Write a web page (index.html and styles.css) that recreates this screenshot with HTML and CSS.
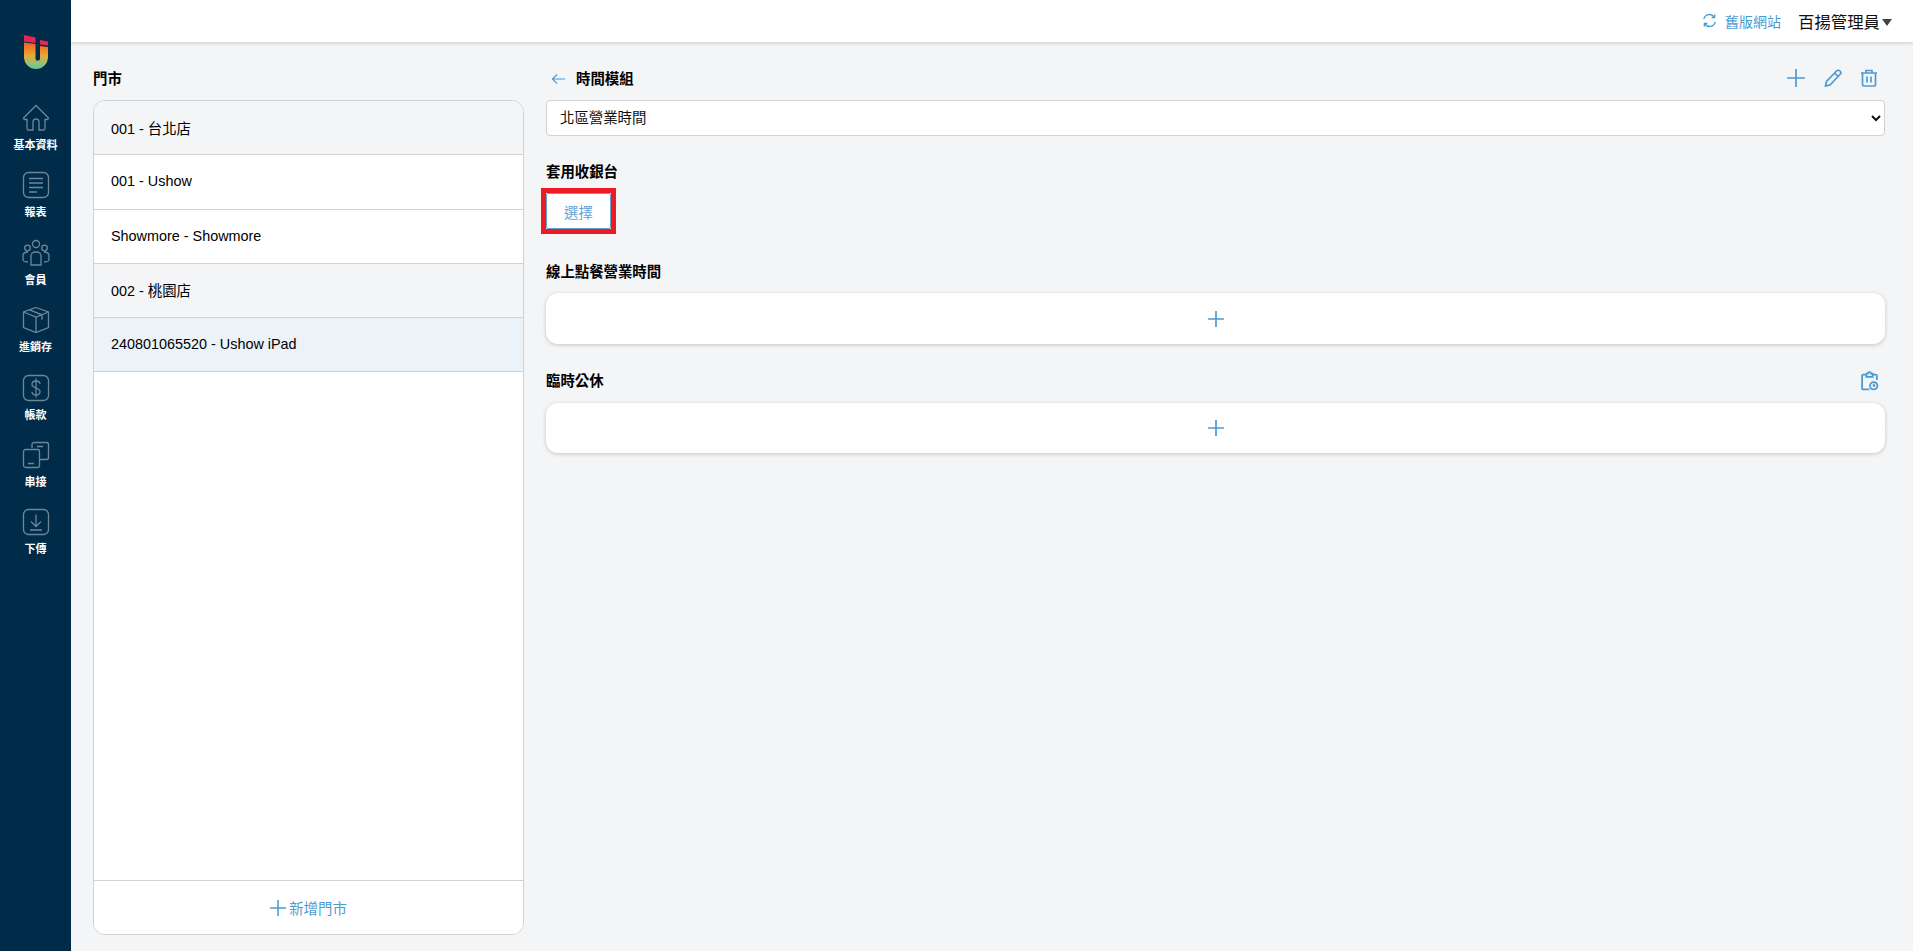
FILE: index.html
```html
<!DOCTYPE html>
<html lang="zh-Hant">
<head>
<meta charset="utf-8">
<title>時間模組</title>
<link rel="stylesheet" href="styles.css">
</head>
<body>
<div class="app">
  <nav class="sidebar">
    <svg class="logo" viewBox="0 0 24 34" width="24" height="34">
      <defs><linearGradient id="lg" x1="0" y1="0" x2="0" y2="1"><stop offset="0" stop-color="#f0602b"/><stop offset=".5" stop-color="#e9a92f"/><stop offset=".8" stop-color="#93c27a"/><stop offset="1" stop-color="#5cc3a7"/></linearGradient></defs>
      <path d="M0 0l11.500 2.500V8L0 6.500z" fill="#e8264f"/>
      <path d="M16 5l8 1.500v4L16 9.500z" fill="#e8264f"/>
      <path d="M0 7.500l11.500 1.500V23.500a2.250 2.250 0 0 0 4.500 0V11l8 1v10a12 12 0 0 1-24 0z" fill="url(#lg)"/>
    </svg>
    <a class="nav-item"><svg viewBox="0 0 28 28" class="nav-icon"><path d="M1.500 14 14 1.500 26.500 14a1.500 1.500 0 0 1-1.500 1.500h-2v9a1.500 1.500 0 0 1-1.500 1.500H17v-8a3 3 0 0 0-6 0v8H6.500A1.500 1.500 0 0 1 5 24.500v-9H3A1.500 1.500 0 0 1 1.500 14z"/></svg><span>基本資料</span></a>
    <a class="nav-item"><svg viewBox="0 0 28 28" class="nav-icon"><rect x="1.500" y="1.500" width="25" height="25" rx="5"/><path d="M7 7.500h14M7 12h14M7 16.500h14M7 21h8"/></svg><span>報表</span></a>
    <a class="nav-item"><svg viewBox="0 0 28 28" class="nav-icon"><circle cx="14" cy="5" r="3.500"/><circle cx="5.500" cy="9" r="2.800"/><circle cx="22.500" cy="9" r="2.800"/><path d="M9 26v-9a4 4 0 0 1 4-4h2a4 4 0 0 1 4 4v9zM6 23c-6 0-5-2-5-6 0-3 2-4 5-4M22 23c6 0 5-2 5-6 0-3-2-4-5-4"/></svg><span>會員</span></a>
    <a class="nav-item"><svg viewBox="0 0 28 28" class="nav-icon"><path d="M14 1.500 26.500 6v15.500L14 26.500 1.500 21.500V6zM1.500 6 14 11l12.500-5M14 11v15.500M7.500 3.800 20 8.800v5"/></svg><span>進銷存</span></a>
    <a class="nav-item"><svg viewBox="0 0 28 28" class="nav-icon"><rect x="1.500" y="1.500" width="25" height="25" rx="5"/><path d="M18 10c0-2-2-3-4-3s-4 1-4 3.300c0 5 8 2.500 8 7.200 0 2.300-2 3.500-4 3.500s-4-1.200-4-3.200M14 4.500v19"/></svg><span>帳款</span></a>
    <a class="nav-item"><svg viewBox="0 0 28 28" class="nav-icon"><path d="M10 7V3.500a2 2 0 0 1 2-2h12.500a2 2 0 0 1 2 2v13a2 2 0 0 1-2 2H17M15 5.500h6"/><path d="M3.500 8.500H15.500a2 2 0 0 1 2 2v14a2 2 0 0 1-2 2H3.500a2 2 0 0 1-2-2v-14a2 2 0 0 1 2-2zM6 22.500h6"/></svg><span>串接</span></a>
    <a class="nav-item"><svg viewBox="0 0 28 28" class="nav-icon"><rect x="1.500" y="1.500" width="25" height="25" rx="5"/><path d="M14 6.500v11.500M9 13.500l5 5 5-5M8 22h12"/></svg><span>下傳</span></a>
  </nav>
  <div class="main">
    <header class="topbar">
      <a class="old-site">
        <svg viewBox="0 0 16 16" class="ico-sync"><path d="M2 6.500A6 6 0 0 1 13 4.500M13.500 1.500v3.300h-3.300M14 9.500A6 6 0 0 1 3 11.500M2.500 14.500v-3.300h3.300"/></svg>
        <span>舊版網站</span>
      </a>
      <div class="user"><span class="user-name">百揚管理員</span><i class="caret"></i></div>
    </header>
    <div class="content">
      <section class="stores">
        <h2 class="title">門市</h2>
        <div class="store-card">
          <ul class="store-list">
            <li class="grey">001 - 台北店</li>
            <li>001 - Ushow</li>
            <li>Showmore - Showmore</li>
            <li class="grey">002 - 桃園店</li>
            <li class="active">240801065520 - Ushow iPad</li>
          </ul>
          <button class="add-store"><svg viewBox="0 0 16 16" class="ico-plus-s"><path d="M8 0v16M0 8h16"/></svg><span>新增門市</span></button>
        </div>
      </section>
      <section class="detail">
        <div class="head-row">
          <div class="head-left">
            <svg viewBox="0 0 16 12" class="ico-back"><path d="M15 6H1.500M6.500 1 1.500 6l5 5"/></svg>
            <h2 class="title">時間模組</h2>
          </div>
          <div class="tools">
            <svg viewBox="0 0 18 18" class="tool"><path d="M9 0v18M0 9h18"/></svg>
            <svg viewBox="0 0 18 18" class="tool"><path d="M12.500 2a2.200 2.200 0 0 1 3.500 3.500L6 16l-4.500 1 1-4.500zM10.500 4l3.500 3.500"/></svg>
            <svg viewBox="0 0 18 18" class="tool"><path d="M1 4h16M6 4V1.500h6V4M2.500 4v11.500a1.500 1.500 0 0 0 1.500 1.500h10a1.500 1.500 0 0 0 1.500-1.500V4M7 7.500V13.500M11 7.500V13.500"/></svg>
          </div>
        </div>
        <select class="module-select"><option>北區營業時間</option></select>
        <h3 class="title apply">套用收銀台</h3>
        <div class="highlight"><button class="choose">選擇</button></div>
        <h3 class="title online">線上點餐營業時間</h3>
        <button class="add-card"><svg viewBox="0 0 18 18" class="tool"><path d="M9 1v16M1 9h16"/></svg></button>
        <div class="holiday-row">
          <h3 class="title">臨時公休</h3>
          <svg viewBox="0 0 18 18" class="tool-clip"><path d="M6 3H3a1 1 0 0 0-1 1v12a1 1 0 0 0 1 1h6M12 3h3a1 1 0 0 1 1 1v4M6 2h1.500a1.500 1.500 0 0 1 3 0H12v3H6z"/><circle cx="13" cy="13.500" r="3.500"/><path d="M13 11.500v2h1.500"/></svg>
        </div>
        <button class="add-card"><svg viewBox="0 0 18 18" class="tool"><path d="M9 1v16M1 9h16"/></svg></button>
      </section>
    </div>
  </div>
</div>
</body>
</html>
```
FILE: styles.css
```css
* { box-sizing: border-box; }
html, body { margin: 0; height: 100%; overflow: hidden; }
body { font-family: "Liberation Sans", "Noto Sans CJK TC", sans-serif; font-size: 14.400px; color: #000; background: #f4f5f7; }
.app { display: flex; height: 951px; }
.sidebar { width: 71px; flex: none; background: #002c4a; display: flex; flex-direction: column; align-items: center; padding-top: 35px; }
.logo { display: block; margin-bottom: 35px; margin-left: 1px; }
.nav-item { display: flex; flex-direction: column; align-items: center; height: 67.400px; color: #fff; font-size: 11px; font-weight: 700; line-height: 14px; }
.nav-icon { width: 28px; height: 28px; fill: none; stroke: #6d8799; stroke-width: 1.300; margin-bottom: 6px; }
.main { flex: 1; min-width: 0; display: flex; flex-direction: column; }
.topbar { height: 42px; background: #fff; box-shadow: 0 1px 4px rgba(0,0,0,.18); display: flex; justify-content: flex-end; align-items: center; padding: 0 21px 1px 0; }
.old-site { display: flex; align-items: center; gap: 8px; color: #4d9ad2; font-size: 14px; margin-right: 17px; }
.ico-sync { width: 15px; height: 15px; fill: none; stroke: #4d9ad2; stroke-width: 1.400; }
.user { display: flex; align-items: center; font-size: 16.400px; color: #111; }
.caret { width: 0; height: 0; border-left: 5.500px solid transparent; border-right: 5.500px solid transparent; border-top: 7px solid #444; margin-left: 2px; margin-top: 3px; }
.content { flex: 1; display: flex; min-height: 0; padding: 28px 28px 16px 22px; gap: 22px; }
.title { margin: 0; font-size: 14.400px; font-weight: 700; line-height: 18px; }
.stores { width: 431px; flex: none; display: flex; flex-direction: column; }
.store-card { flex: 1; margin-top: 12px; background: #fff; border: 1px solid #cfd1d3; border-radius: 12px; overflow: hidden; display: flex; flex-direction: column; }
.store-list { list-style: none; margin: 0; padding: 0; flex: 1; }
.store-list li { height: 54.250px; display: flex; align-items: center; padding: 0 0 1px 17px; border-bottom: 1px solid #cfd1d3; font-size: 14.400px; }
.store-list .grey { background: #f4f5f7; }
.store-list .active { background: #ebf2f8; }
.add-store { height: 54px; border: 0; border-top: 1px solid #cfd1d3; background: #fff; color: #4d9ad2; font: inherit; font-size: 14.400px; display: flex; align-items: center; justify-content: center; gap: 3px; }
.ico-plus-s { width: 16px; height: 16px; fill: none; stroke: #4d9ad2; stroke-width: 1.500; }
.detail { flex: 1; min-width: 0; display: flex; flex-direction: column; align-items: stretch; }
.head-row { display: flex; justify-content: space-between; align-items: center; height: 18px; }
.head-left { display: flex; align-items: center; gap: 10px; padding-left: 5px; }
.ico-back { width: 15px; height: 12px; fill: none; stroke: #4d9ad2; stroke-width: 1.300; }
.tools { display: flex; gap: 18.500px; padding-right: 7px; margin-top: -3px; }
.tool { width: 18px; height: 18px; fill: none; stroke: #4d9ad2; stroke-width: 1.700; display: block; }
.module-select { margin-top: 12px; height: 36px; width: 100%; background: #fff; border: 1px solid #cfd1d3; border-radius: 4px; font: inherit; font-size: 14.400px; color: #111; padding-left: 9px; }
.apply { margin-top: 27px; }
.highlight { align-self: flex-start; margin: 7px 0 0 -5px; border: 5px solid #ed1c24; }
.choose { display: block; width: 65px; height: 36px; background: #fff; border: 1px solid #5fa3d6; border-radius: 2px; color: #5fa3d6; font: inherit; font-size: 14.400px; padding: 0; }
.online { margin-top: 29px; }
.add-card { margin-top: 12px; height: 51px; border: 0; background: #fff; border-radius: 12px; box-shadow: 0 1px 4px rgba(0,0,0,.2); display: flex; align-items: center; justify-content: center; padding: 0; }
.holiday-row { margin-top: 27px; display: flex; justify-content: space-between; align-items: center; height: 20px; }
.holiday-row + .add-card { margin-top: 12px; height: 50px; }
.tool-clip { width: 19px; height: 20px; fill: none; stroke: #4d9ad2; stroke-width: 1.700; margin-right: 6px; }
```
